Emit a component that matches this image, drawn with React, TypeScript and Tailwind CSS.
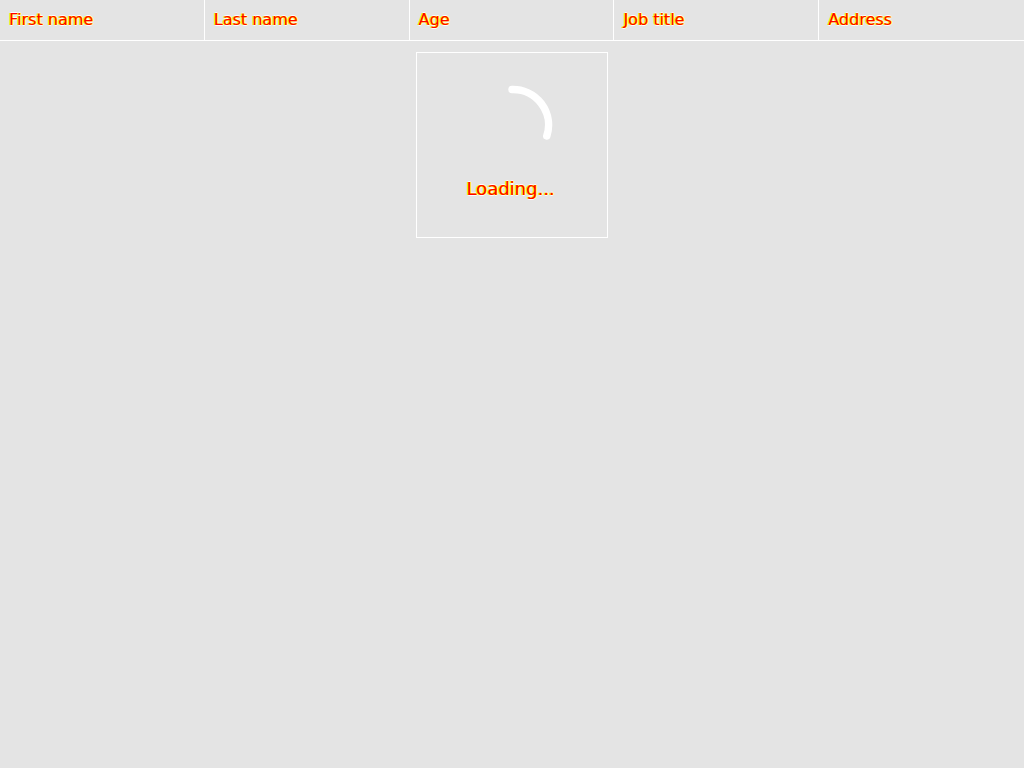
const columns = ['First name', 'Last name', 'Age', 'Job title', 'Address'];

const odd = {
  color: '#ff0000',
  textShadow: '1px 0 #ffff00, -1px 0 #ffff00, 0 1px #ffffff, 0 -1px #ffffff',
};

export default function App() {
  return (
    <div className="min-h-screen w-full bg-[#e4e4e4]" style={{ fontFamily: '"DejaVu Sans", sans-serif' }}>
      {/* Header */}
      <div className="grid grid-cols-5 h-[41px] border-b border-white">
        {columns.map((col, i) => (
          <div
            key={col}
            className={`flex items-center px-[9px] text-[16px] ${i < columns.length - 1 ? 'border-r border-white' : ''}`}
          >
            <span style={odd}>{col}</span>
          </div>
        ))}
      </div>

      {/* Loading overlay */}
      <div className="flex justify-center pt-[11px]">
        <div className="w-[192px] h-[186px] border border-white flex flex-col items-center">
          <svg width="80" height="80" viewBox="0 0 80 80" className="mt-[32px] ml-[1px] shrink-0">
            <path
              d="M 39 4.5 A 35.5 35.5 0 0 1 73.8 51"
              fill="none"
              stroke="#ffffff"
              strokeWidth="7.5"
              strokeLinecap="round"
            />
          </svg>
          <span className="mt-[10px] mr-[3px] text-[18px] leading-[27px]" style={odd}>Loading...</span>
        </div>
      </div>
    </div>
  );
}
